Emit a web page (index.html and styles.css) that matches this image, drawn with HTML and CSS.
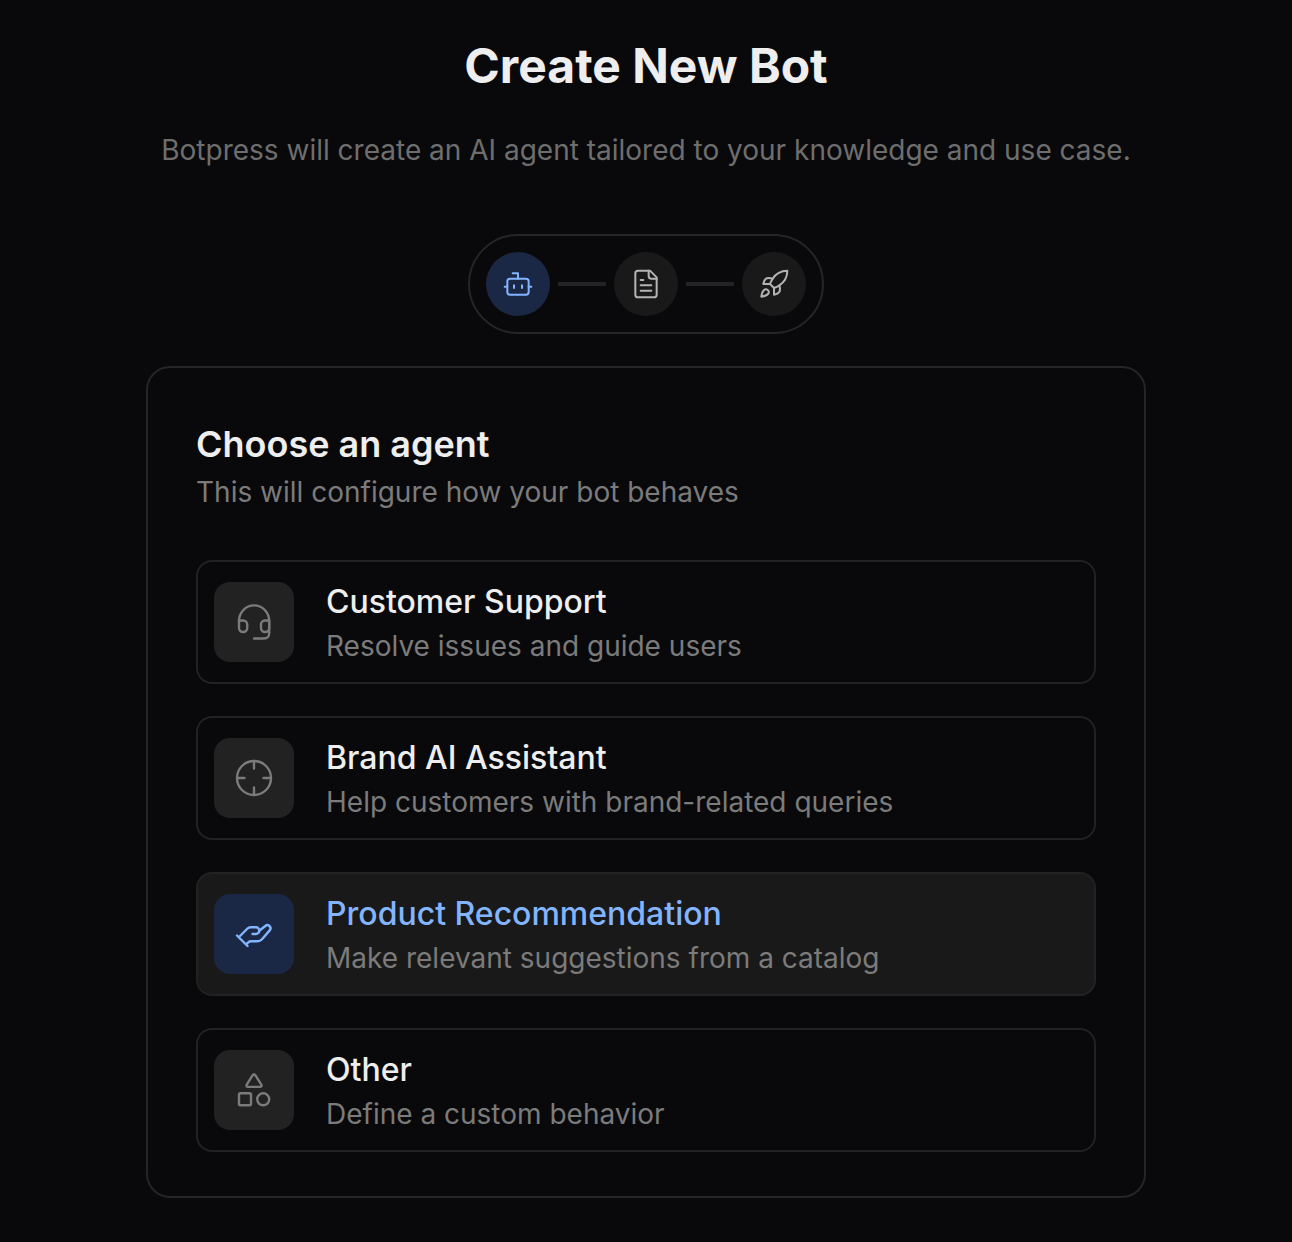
FILE: index.html
```html
<!DOCTYPE html>
<html lang="en">
<head>
<meta charset="utf-8">
<title>Create New Bot</title>
<link rel="stylesheet" href="styles.css">
</head>
<body>
<main class="page">
  <h1 class="title">Create New Bot</h1>
  <p class="subtitle">Botpress will create an AI agent tailored to your knowledge and use case.</p>

  <div class="stepper">
    <div class="step step-active">
      <svg class="step-icon" viewBox="0 0 24 24"><path d="M12 8V4H8"/><rect width="16" height="12" x="4" y="8" rx="2"/><path d="M2 14h2M20 14h2M15 13v2M9 13v2"/></svg>
    </div>
    <span class="connector"></span>
    <div class="step">
      <svg class="step-icon" viewBox="0 0 24 24"><path d="M15 2H6a2 2 0 0 0-2 2v16a2 2 0 0 0 2 2h12a2 2 0 0 0 2-2V7Z"/><path d="M14 2v4a2 2 0 0 0 2 2h4M10 9H8M16 13H8M16 17H8"/></svg>
    </div>
    <span class="connector"></span>
    <div class="step">
      <svg class="step-icon" viewBox="0 0 24 24"><path d="M4.5 16.5c-1.5 1.26-2 5-2 5s3.74-.5 5-2c.71-.84.7-2.13-.09-2.91a2.18 2.18 0 0 0-2.91-.09z"/><path d="m12 15-3-3a22 22 0 0 1 2-3.95A12.88 12.88 0 0 1 22 2c0 2.72-.78 7.5-6 11a22.35 22.35 0 0 1-4 2z"/><path d="M9 12H4s.55-3.03 2-4c1.62-1.08 5 0 5 0"/><path d="M12 15v5s3.03-.55 4-2c1.08-1.62 0-5 0-5"/></svg>
    </div>
  </div>

  <section class="panel">
    <h2 class="panel-title">Choose an agent</h2>
    <p class="panel-text">This will configure how your bot behaves</p>
    <div class="options">
      <div class="option">
        <div class="tile">
          <svg class="tile-icon" viewBox="0 0 40 40"><path d="M5 19a15 15.500 0 0 1 30.200 0v12.500a5 5 0 0 1-5 5H20"/><path d="M5 18.500h4.200a4 4 0 0 1 4 4v3.500a4 4 0 0 1-4 4H9a4 4 0 0 1-4-4zM35.200 18.500H31a4 4 0 0 0-4 4v3.500a4 4 0 0 0 4 4h.2a4 4 0 0 0 4-4z"/></svg>
        </div>
        <div class="option-body">
          <h3 class="option-title">Customer Support</h3>
          <p class="option-text">Resolve issues and guide users</p>
        </div>
      </div>
      <div class="option">
        <div class="tile">
          <svg class="tile-icon" viewBox="0 0 40 40"><circle cx="20" cy="20" r="17"/><path d="M20 3v7.500M20 29.500v7.500M3 20h7.500M29.500 20H37"/></svg>
        </div>
        <div class="option-body">
          <h3 class="option-title">Brand AI Assistant</h3>
          <p class="option-text">Help customers with brand-related queries</p>
        </div>
      </div>
      <div class="option option-selected">
        <div class="tile">
          <svg class="tile-icon" viewBox="0 0 40 40"><path d="M3 21.500L13.500 32M5.500 22.500l8-8q1.200-1.200 3-1.200h5.500a3.300 3.300 0 0 1 0 6.700H18.500M25 17l6.300-5a3.100 3.100 0 0 1 4.600 4.100L28 25.200q-1.800 2-4.500 2H17q-1.500 0-2.500 1L12 30.500"/></svg>
        </div>
        <div class="option-body">
          <h3 class="option-title">Product Recommendation</h3>
          <p class="option-text">Make relevant suggestions from a catalog</p>
        </div>
      </div>
      <div class="option">
        <div class="tile">
          <svg class="tile-icon" viewBox="0 0 40 40"><path d="M18.700 5.200a1.600 1.600 0 0 1 2.600 0l6 9.500a1.400 1.400 0 0 1-1.200 2.200H13.900a1.400 1.400 0 0 1-1.200-2.200z"/><rect x="5" y="23.300" width="12" height="12" rx="1.500"/><circle cx="29.200" cy="29.300" r="6"/></svg>
        </div>
        <div class="option-body">
          <h3 class="option-title">Other</h3>
          <p class="option-text">Define a custom behavior</p>
        </div>
      </div>
    </div>
  </section>
</main>
</body>
</html>
```
FILE: styles.css
```css
* {
  box-sizing: border-box;
  margin: 0;
}

body {
  background: #09090b;
  color: #eeeeee;
  font-family: Inter, "Liberation Sans", sans-serif;
}

.page {
  display: flex;
  flex-direction: column;
  align-items: center;
  padding-top: 34px;
}

.title {
  font-size: 48px;
  line-height: 64px;
  font-weight: 700;
}

.subtitle {
  margin-top: 32px;
  font-size: 28px;
  line-height: 40px;
  color: #6e6e6e;
}

.stepper {
  display: flex;
  align-items: center;
  gap: 8px;
  margin-top: 64px;
  padding: 16px;
  border: 2px solid #252527;
  border-radius: 50px;
}

.step {
  display: flex;
  align-items: center;
  justify-content: center;
  width: 64px;
  height: 64px;
  border-radius: 50%;
  background: #191919;
  color: #b4b4b4;
}

.step-active {
  background: #1a2845;
  color: #83b4ff;
}

.step-icon,
.tile-icon {
  fill: none;
  stroke: currentColor;
  stroke-linecap: round;
  stroke-linejoin: round;
}

.step-icon {
  width: 32px;
  height: 32px;
  stroke-width: 1.5;
}

.connector {
  width: 48px;
  height: 4px;
  background: #232325;
}

.panel {
  width: 1000px;
  height: 832px;
  margin-top: 32px;
  padding: 50px 48px 0;
  border: 2px solid #252527;
  border-radius: 24px;
}

.panel-title {
  font-size: 36px;
  line-height: 52px;
  font-weight: 600;
}

.panel-text {
  margin-top: 2px;
  font-size: 28px;
  line-height: 40px;
  color: #7b7b7b;
}

.options {
  display: grid;
  gap: 32px;
  margin-top: 48px;
}

.option {
  display: flex;
  align-items: center;
  gap: 32px;
  height: 124px;
  padding: 0 16px;
  border: 2px solid #222222;
  border-radius: 16px;
}

.tile {
  display: flex;
  align-items: center;
  justify-content: center;
  width: 80px;
  height: 80px;
  border-radius: 16px;
  background: #222222;
  color: #7b7b7b;
}

.tile-icon {
  width: 40px;
  height: 40px;
  stroke-width: 2.4;
}

.option-title {
  font-size: 32px;
  line-height: 48px;
  font-weight: 500;
}

.option-text {
  font-size: 28px;
  line-height: 40px;
  color: #7b7b7b;
}

.option-selected {
  background: #191919;
}

.option-selected .tile {
  background: #1a2845;
  color: #83b4ff;
}

.option-selected .option-title {
  color: #83b4ff;
}
```
